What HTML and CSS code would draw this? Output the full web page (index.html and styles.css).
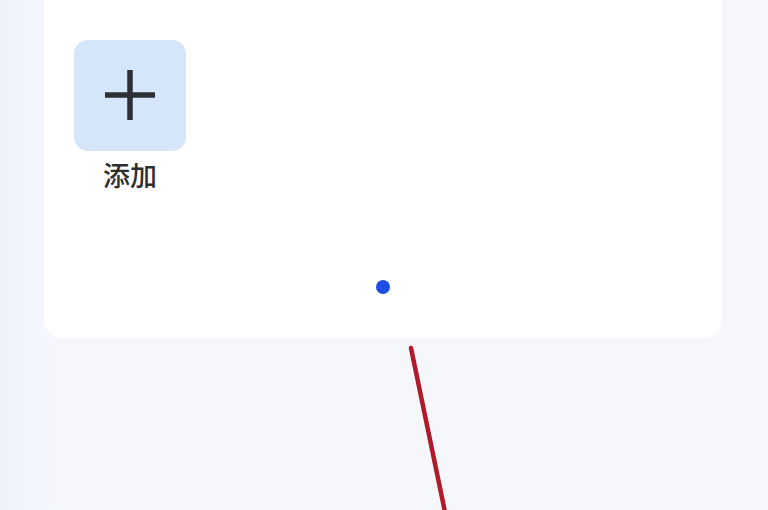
FILE: index.html
```html
<!DOCTYPE html>
<html lang="zh">
<head>
<meta charset="utf-8">
<link rel="stylesheet" href="styles.css">
</head>
<body>
<div class="page">
  <div class="card">
    <div class="grid">
      <div class="item">
        <div class="tile">
          <svg class="plus" viewBox="0 0 54 54" width="54" height="54">
            <path d="M27 2V52M2 27H52" stroke="#2c3036" stroke-width="5.5" fill="none"/>
          </svg>
        </div>
        <div class="label">添加</div>
      </div>
    </div>
    <div class="pager"><span class="dot"></span></div>
  </div>
  <svg class="annot" viewBox="0 0 768 510" width="768" height="510">
    <path d="M411 348L445 512" stroke="#b01a2a" stroke-width="4.5" fill="none" stroke-linecap="round"/>
  </svg>
</div>
</body>
</html>
```
FILE: styles.css
```css
html, body {
  margin: 0;
  padding: 0;
}
body {
  width: 768px;
  height: 510px;
  overflow: hidden;
  background: linear-gradient(to right, #edf3fc 0px, #f1f5fc 25px, #f5f7fb 60px, #f6f7fb 100%);
  font-family: "Noto Sans CJK SC", "Noto Sans", sans-serif;
}
.page {
  position: relative;
  width: 768px;
  height: 510px;
}
.card {
  margin-left: 44px;
  width: 678px;
  height: 338px;
  box-sizing: border-box;
  background: #ffffff;
  border-radius: 0 0 18px 18px;
  display: flex;
  flex-direction: column;
  padding: 40px 0 44px 30px;
}
.grid {
  display: flex;
}
.item {
  display: flex;
  flex-direction: column;
  align-items: center;
  width: 112px;
}
.tile {
  width: 112px;
  height: 111px;
  border-radius: 14px;
  background: #d6e6fa;
  display: flex;
  align-items: center;
  justify-content: center;
}
.plus {
  display: block;
  margin-top: -2px;
}
.label {
  margin-top: 4px;
  font-size: 27px;
  font-weight: 500;
  line-height: 40px;
  color: #2e2e2e;
}
.pager {
  margin-top: auto;
  margin-left: -30px;
  display: flex;
  justify-content: center;
}
.dot {
  width: 14px;
  height: 14px;
  border-radius: 50%;
  background: #1b4fe6;
}
.annot {
  position: absolute;
  left: 0;
  top: 0;
  pointer-events: none;
}
```
